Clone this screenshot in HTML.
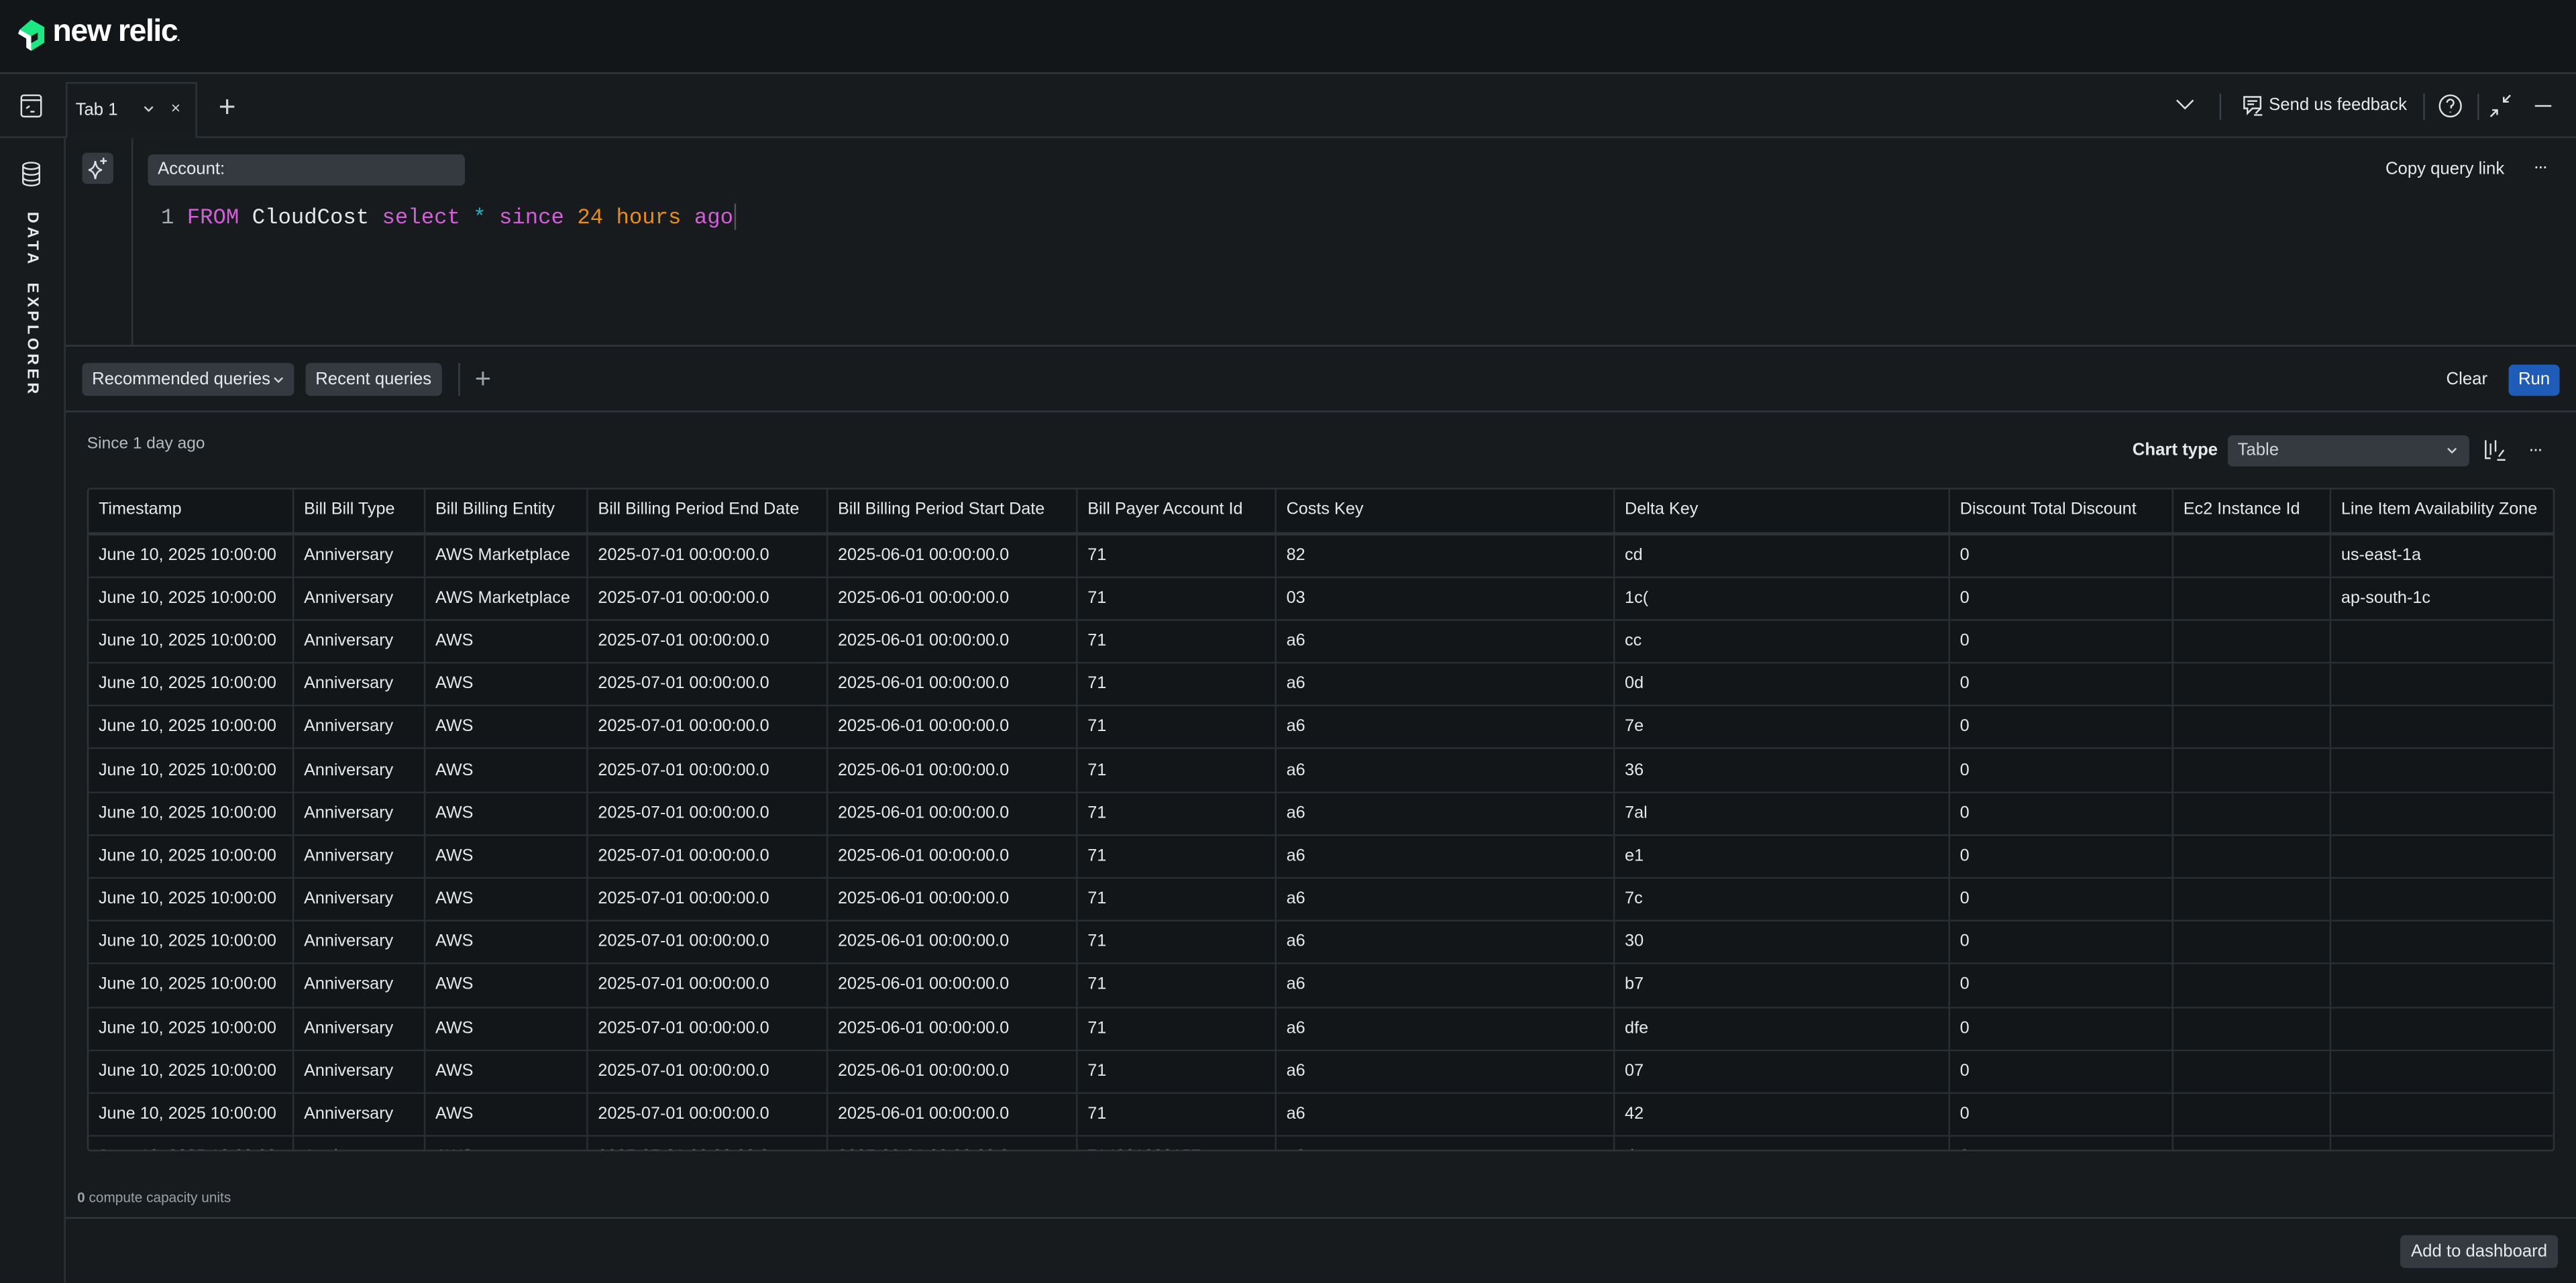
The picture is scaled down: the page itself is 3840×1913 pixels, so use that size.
<!DOCTYPE html>
<html><head><meta charset="utf-8">
<style>
html,body{margin:0;padding:0;width:3840px;height:1912px;overflow:hidden;background:#171b1e;}
#s{position:absolute;left:0;top:0;width:1568px;height:781px;transform:scale(2.449);transform-origin:0 0;font-family:"Liberation Sans",sans-serif;color:#e6e8ea;background:#171b1e;}
.a{position:absolute}
.hl{position:absolute;height:1px;background:#2e3337}
.vl{position:absolute;width:1px;background:#2e3337}
.btn{position:absolute;background:#343a40;border-radius:3px;font-size:10.5px;color:#e6e8ea;line-height:20px;padding:0 6px;box-sizing:border-box;white-space:nowrap}
table{border-collapse:collapse;font-size:10.3px;table-layout:fixed;}
td,th{border:1px solid #2a2f33;height:25.2px;padding:0 6px;text-align:left;white-space:nowrap;overflow:hidden;font-weight:normal;color:#e6e8ea}
th{height:25.5px;border-bottom:2px solid #2e3337}
tr{border-bottom:1px solid #2e3337}
</style></head><body>
<div id="s">
<div class="a" style="left:0;top:0;width:1568px;height:45px;background:#131619"></div>
<svg class="a" style="left:9px;top:11px" width="20" height="22" viewBox="0 0 20 22"><path d="M10 1 L18 5.5 V15 L10 20 V11 L3 7 Z" fill="#1ce783"/><path d="M3 7 L10 11 V20 L7 18 V12.5 L2 9.5 Z" fill="#fff"/><path d="M10 11 L14 8.8 V13 L10 15.3Z" fill="#131619"/></svg>
<div class="a" style="left:32px;top:9px;font-size:19px;font-weight:bold;color:#fff;letter-spacing:-0.6px">new relic<span style="font-size:6px">.</span></div>
<div class="hl" style="left:0;top:44px;width:1568px;background:#33383c"></div>
<div class="vl" style="left:39px;top:84px;height:697px"></div>
<svg class="a" style="left:12px;top:57px" width="14" height="15" viewBox="0 0 14 15" fill="none" stroke="#dfe2e5" stroke-width="1"><rect x="1" y="1" width="12" height="13" rx="1.5"/><path d="M1 4h12M4 9l2-1.5M6.5 11H9"/></svg>
<svg class="a" style="left:13px;top:98px" width="12" height="16" viewBox="0 0 12 16" fill="none" stroke="#dfe2e5" stroke-width="1"><ellipse cx="6" cy="3" rx="5" ry="2"/><path d="M1 3v10c0 1.1 2.2 2 5 2s5-.9 5-2V3M1 6.5c0 1.1 2.2 2 5 2s5-.9 5-2M1 10c0 1.1 2.2 2 5 2s5-.9 5-2"/></svg>
<div class="a" style="left:25px;top:129px;transform:rotate(90deg);transform-origin:0 0;font-size:9.5px;font-weight:bold;letter-spacing:2.2px;color:#e6e8ea;white-space:nowrap">DATA &nbsp;EXPLORER</div>
<div class="hl" style="left:0;top:83px;width:1568px"></div>
<div class="a" style="left:40px;top:50px;width:80px;height:34px;background:#171b1e;border:1px solid #2e3337;border-bottom:none;box-sizing:border-box"></div>
<div class="a" style="left:46px;top:61px;font-size:10.5px">Tab 1</div>
<svg class="a" style="left:87px;top:64px" width="7" height="5" viewBox="0 0 7 5" fill="none" stroke="#cfd3d6"><path d="M1 1l2.5 2.5L6 1"/></svg>
<div class="a" style="left:104px;top:61px;font-size:10px;color:#cfd3d6">×</div>
<div class="a" style="left:133px;top:55px;font-size:18px;color:#cfd3d6;font-weight:300">+</div>
<svg class="a" style="left:1324px;top:60px" width="12" height="8" viewBox="0 0 12 8" fill="none" stroke="#dfe2e5"><path d="M1 1l5 5 5-5"/></svg>
<div class="vl" style="left:1351px;top:57px;height:16px;background:#3a4045"></div>
<svg class="a" style="left:1365px;top:58px" width="13" height="14" viewBox="0 0 13 14" fill="none" stroke="#dfe2e5" stroke-width="1"><path d="M1 1h10v7H6l-3 3V8H1z"/><path d="M3 3.5h6M3 5.5h4M7 12h5M8 11l3-3"/></svg>
<div class="a" style="left:1381px;top:58px;font-size:10.5px">Send us feedback</div>
<div class="vl" style="left:1475px;top:57px;height:16px;background:#3a4045"></div>
<svg class="a" style="left:1484px;top:57px" width="15" height="15" viewBox="0 0 15 15" fill="none" stroke="#dfe2e5"><circle cx="7.5" cy="7.5" r="6.5"/><path d="M5.5 5.5a2 2 0 1 1 2.5 2v1.5M7.5 11v.5"/></svg>
<div class="vl" style="left:1508px;top:57px;height:16px;background:#3a4045"></div>
<svg class="a" style="left:1515px;top:57px" width="14" height="15" viewBox="0 0 14 15" fill="none" stroke="#dfe2e5"><path d="M13 1L9 5M9 2v3h3M1 14l4-4M2 10h3v3"/></svg>
<div class="hl" style="left:1543px;top:64px;width:10px;background:#dfe2e5"></div>
<div class="vl" style="left:80px;top:84px;height:127px"></div>
<div class="a" style="left:50px;top:93px;width:19px;height:19px;background:#343a40;border-radius:3px"></div>
<svg class="a" style="left:52px;top:95px" width="15" height="15" viewBox="0 0 15 15" fill="none" stroke="#dfe2e5" stroke-width="1"><path d="M6 3C6.5 7 8 8 10 8.5 8 9 6.5 10 6 14 5.5 10 4 9 2 8.5 4 8 5.5 7 6 3Z"/><path d="M11 1v4M9 3h4"/></svg>
<div class="btn" style="left:90px;top:94px;width:193px;height:19px;line-height:19px">Account:</div>
<div class="a" style="left:98px;top:125px;font-family:'Liberation Mono',monospace;font-size:13.2px;white-space:pre;color:#aab0b5">1 <span style="color:#d25fd8">FROM</span> <span style="color:#e6e8ea">CloudCost</span> <span style="color:#d25fd8">select</span> <span style="color:#2bb1c4">*</span> <span style="color:#d25fd8">since</span> <span style="color:#e88d1c">24</span> <span style="color:#e88d1c">hours</span> <span style="color:#d25fd8">ago</span></div>
<div class="vl" style="left:447px;top:124px;height:16px;background:#555"></div>
<div class="a" style="left:1452px;top:97px;font-size:10.5px">Copy query link</div>
<div class="a" style="left:1542px;top:96px;font-size:11px;letter-spacing:-1px">···</div>
<div class="hl" style="left:40px;top:210px;width:1528px;background:#33383c"></div>
<div class="btn" style="left:50px;top:221px;height:20px;width:129px">Recommended queries<svg style="position:absolute;left:116px;top:8px" width="7" height="5" viewBox="0 0 7 5" fill="none" stroke="#cfd3d6"><path d="M1 1l2.5 2.5L6 1"/></svg></div>
<div class="btn" style="left:186px;top:221px;height:20px;width:83px">Recent queries</div>
<div class="vl" style="left:279px;top:221px;height:20px;background:#3a4045"></div>
<div class="a" style="left:289px;top:221px;font-size:17px;color:#9aa0a5;font-weight:300">+</div>
<div class="a" style="left:1489px;top:225px;font-size:10.5px">Clear</div>
<div class="a" style="left:1527px;top:222px;width:31px;height:19px;background:#1f5cb8;border-radius:3px;font-size:10.5px;line-height:19px;text-align:center;color:#fff">Run</div>
<div class="hl" style="left:40px;top:250px;width:1528px;background:#33383c"></div>
<div class="a" style="left:53px;top:265px;font-size:10px;color:#b5bbc0">Since 1 day ago</div>
<div class="a" style="left:1298px;top:268px;font-size:10.5px;font-weight:bold">Chart type</div>
<div class="btn" style="left:1356px;top:265px;width:147px;height:19px;line-height:19px;color:#cfd3d6">Table<svg style="position:absolute;right:7px;top:7px" width="7" height="5" viewBox="0 0 7 5" fill="none" stroke="#cfd3d6"><path d="M1 1l2.5 2.5L6 1"/></svg></div>
<svg class="a" style="left:1512px;top:267px" width="14" height="14" viewBox="0 0 14 14" fill="none" stroke="#dfe2e5"><path d="M1 1v11h3M4 3v7M7 1v7M8 13h5M9 11l3-4"/></svg>
<div class="a" style="left:1539px;top:268px;font-size:11px;letter-spacing:-1px">···</div>
<div class="a" style="left:53px;top:297px;width:1502px;height:404px;overflow:hidden;border:1px solid #2e3337;border-radius:2px;box-sizing:border-box;background:#131619">
<table style="width:1502px;margin:-1px 0 0 -1px">
<colgroup><col style="width:125px"><col style="width:80px"><col style="width:99px"><col style="width:146px"><col style="width:152px"><col style="width:121px"><col style="width:206px"><col style="width:204px"><col style="width:136px"><col style="width:96px"><col style="width:137px"></colgroup>
<tr><th>Timestamp</th><th>Bill Bill Type</th><th>Bill Billing Entity</th><th>Bill Billing Period End Date</th><th>Bill Billing Period Start Date</th><th>Bill Payer Account Id</th><th>Costs Key</th><th>Delta Key</th><th>Discount Total Discount</th><th>Ec2 Instance Id</th><th>Line Item Availability Zone</th></tr>
<tr><td>June 10, 2025 10:00:00</td><td>Anniversary</td><td>AWS Marketplace</td><td>2025-07-01 00:00:00.0</td><td>2025-06-01 00:00:00.0</td><td>71</td><td>82</td><td>cd</td><td>0</td><td></td><td>us-east-1a</td></tr>
<tr><td>June 10, 2025 10:00:00</td><td>Anniversary</td><td>AWS Marketplace</td><td>2025-07-01 00:00:00.0</td><td>2025-06-01 00:00:00.0</td><td>71</td><td>03</td><td>1c(</td><td>0</td><td></td><td>ap-south-1c</td></tr>
<tr><td>June 10, 2025 10:00:00</td><td>Anniversary</td><td>AWS</td><td>2025-07-01 00:00:00.0</td><td>2025-06-01 00:00:00.0</td><td>71</td><td>a6</td><td>cc</td><td>0</td><td></td><td></td></tr>
<tr><td>June 10, 2025 10:00:00</td><td>Anniversary</td><td>AWS</td><td>2025-07-01 00:00:00.0</td><td>2025-06-01 00:00:00.0</td><td>71</td><td>a6</td><td>0d</td><td>0</td><td></td><td></td></tr>
<tr><td>June 10, 2025 10:00:00</td><td>Anniversary</td><td>AWS</td><td>2025-07-01 00:00:00.0</td><td>2025-06-01 00:00:00.0</td><td>71</td><td>a6</td><td>7e</td><td>0</td><td></td><td></td></tr>
<tr><td>June 10, 2025 10:00:00</td><td>Anniversary</td><td>AWS</td><td>2025-07-01 00:00:00.0</td><td>2025-06-01 00:00:00.0</td><td>71</td><td>a6</td><td>36</td><td>0</td><td></td><td></td></tr>
<tr><td>June 10, 2025 10:00:00</td><td>Anniversary</td><td>AWS</td><td>2025-07-01 00:00:00.0</td><td>2025-06-01 00:00:00.0</td><td>71</td><td>a6</td><td>7al</td><td>0</td><td></td><td></td></tr>
<tr><td>June 10, 2025 10:00:00</td><td>Anniversary</td><td>AWS</td><td>2025-07-01 00:00:00.0</td><td>2025-06-01 00:00:00.0</td><td>71</td><td>a6</td><td>e1</td><td>0</td><td></td><td></td></tr>
<tr><td>June 10, 2025 10:00:00</td><td>Anniversary</td><td>AWS</td><td>2025-07-01 00:00:00.0</td><td>2025-06-01 00:00:00.0</td><td>71</td><td>a6</td><td>7c</td><td>0</td><td></td><td></td></tr>
<tr><td>June 10, 2025 10:00:00</td><td>Anniversary</td><td>AWS</td><td>2025-07-01 00:00:00.0</td><td>2025-06-01 00:00:00.0</td><td>71</td><td>a6</td><td>30</td><td>0</td><td></td><td></td></tr>
<tr><td>June 10, 2025 10:00:00</td><td>Anniversary</td><td>AWS</td><td>2025-07-01 00:00:00.0</td><td>2025-06-01 00:00:00.0</td><td>71</td><td>a6</td><td>b7</td><td>0</td><td></td><td></td></tr>
<tr><td>June 10, 2025 10:00:00</td><td>Anniversary</td><td>AWS</td><td>2025-07-01 00:00:00.0</td><td>2025-06-01 00:00:00.0</td><td>71</td><td>a6</td><td>dfe</td><td>0</td><td></td><td></td></tr>
<tr><td>June 10, 2025 10:00:00</td><td>Anniversary</td><td>AWS</td><td>2025-07-01 00:00:00.0</td><td>2025-06-01 00:00:00.0</td><td>71</td><td>a6</td><td>07</td><td>0</td><td></td><td></td></tr>
<tr><td>June 10, 2025 10:00:00</td><td>Anniversary</td><td>AWS</td><td>2025-07-01 00:00:00.0</td><td>2025-06-01 00:00:00.0</td><td>71</td><td>a6</td><td>42</td><td>0</td><td></td><td></td></tr>
<tr><td>June 10, 2025 10:00:00</td><td>Anniversary</td><td>AWS</td><td>2025-07-01 00:00:00.0</td><td>2025-06-01 00:00:00.0</td><td>714001000157</td><td>a6</td><td>d</td><td>0</td><td></td><td></td></tr>
</table></div>
<div class="a" style="left:47px;top:724px;font-size:8.5px;color:#9aa0a5"><b>0</b> compute capacity units</div>
<div class="hl" style="left:40px;top:741px;width:1528px;background:#33383c"></div>
<div class="btn" style="left:1461px;top:752px;width:96px;height:20px;text-align:center">Add to dashboard</div>
</div>
</body></html>
